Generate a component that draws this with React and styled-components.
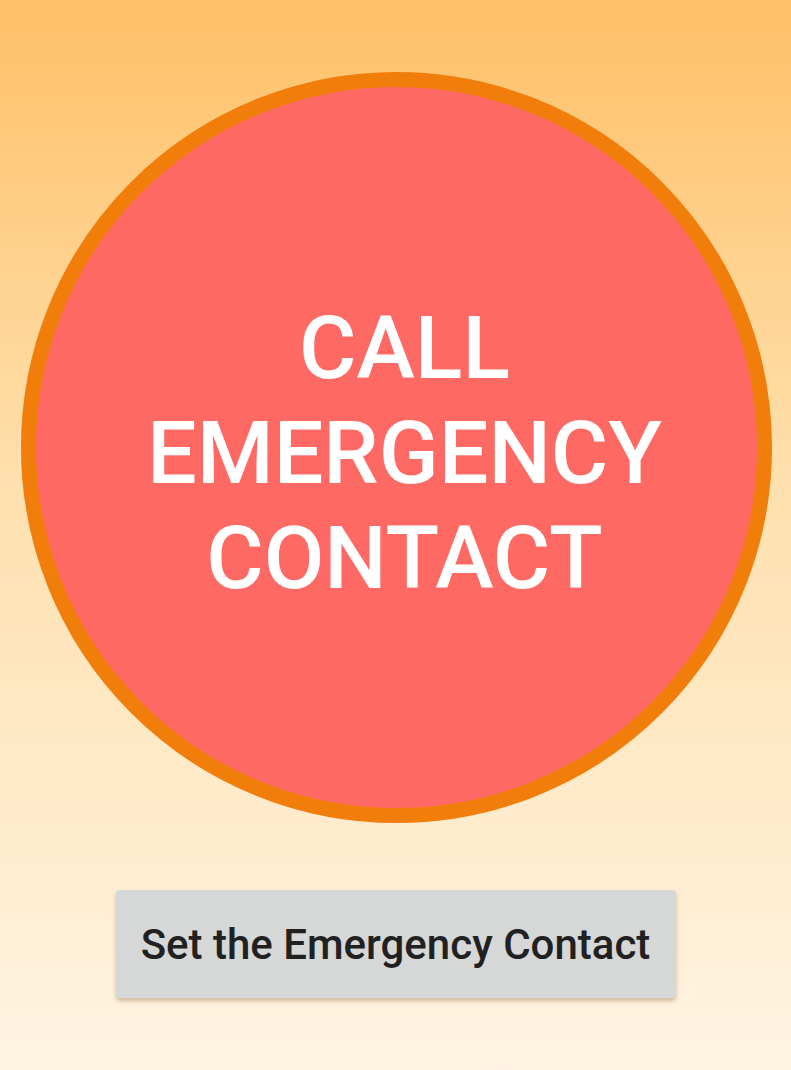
import React from 'react'
import styled, { createGlobalStyle } from 'styled-components'

const GlobalStyle = createGlobalStyle`
  html, body {
    margin: 0;
    padding: 0;
  }
  body {
    font-family: Roboto, "Noto Sans", "Liberation Sans", sans-serif;
  }
`

const Screen = styled.div`
  width: 791px;
  height: 1070px;
  box-sizing: border-box;
  padding-top: 72px;
  display: flex;
  flex-direction: column;
  align-items: center;
  background: linear-gradient(180deg, #fec067 0%, #ffe0ae 45%, #fff4e3 100%);
  overflow: hidden;
`

const CallCircle = styled.button`
  width: 751px;
  height: 751px;
  margin-left: 2px;
  box-sizing: border-box;
  border-radius: 50%;
  border: 15px solid #f17d0b;
  background: #ff6963;
  display: flex;
  align-items: center;
  justify-content: center;
  padding: 10px 0 0 16px;
  cursor: pointer;
  font-family: inherit;
`

const CallLabel = styled.span`
  color: #ffffff;
  font-size: 88px;
  font-weight: 500;
  line-height: 105px;
  text-align: center;
  text-transform: uppercase;
`

const SetButton = styled.button`
  margin-top: 67px;
  width: 560px;
  height: 108px;
  border: none;
  border-radius: 4px;
  background: #d6d7d7;
  color: #212121;
  font-family: inherit;
  font-size: 42px;
  font-weight: 500;
  box-shadow: 0 3px 4px rgba(120, 90, 40, 0.35);
  cursor: pointer;
`

export default function App() {
  return (
    <>
      <GlobalStyle />
      <Screen>
        <CallCircle>
          <CallLabel>
            Call<br />
            Emergency<br />
            Contact
          </CallLabel>
        </CallCircle>
        <SetButton>Set the Emergency Contact</SetButton>
      </Screen>
    </>
  )
}
